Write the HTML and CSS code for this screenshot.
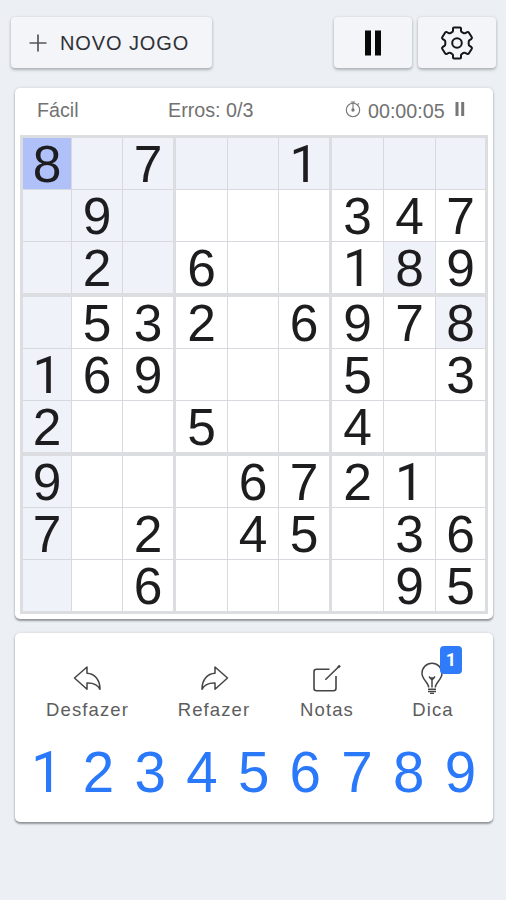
FILE: index.html
```html
<!DOCTYPE html>
<html lang="pt-BR">
<head>
<meta charset="utf-8">
<title>Sudoku</title>
<link rel="stylesheet" href="styles.css">
</head>
<body>
<header class="toolbar">
  <button class="btn btn-new"><svg width="18" height="18" viewBox="0 0 18 18"><path d="M9 .5v17M.5 9h17" stroke="#555" stroke-width="1.7"/></svg><span>NOVO JOGO</span></button>
  <button class="btn btn-icon" aria-label="Pausar"><svg width="18" height="26" viewBox="0 0 18 26"><path d="M1 .5h6v25H1zM11 .5h6v25h-6z" fill="#080808"/></svg></button>
  <button class="btn btn-icon" aria-label="Ajustes"><svg width="34" height="34" viewBox="0 0 34 34" fill="none" stroke="#161616" stroke-width="2" stroke-linejoin="round"><path d="M14 1.500h6q1 0 1 1v2.200q0 1 1 1.500l1.500.9q.9.500 1.800 0l1.900-1q1-.5 1.600.400l3 4.800q.5.900-.3 1.500l-1.900 1.300q-.9.600-.9 1.700v2.400q0 1.100.9 1.700l1.900 1.300q.8.600.3 1.500l-3 4.800q-.6.900-1.600.400l-1.900-1q-.9-.5-1.800 0l-1.500.9q-1 .5-1 1.500v2.200q0 1-1 1h-6q-1 0-1-1v-2.200q0-1-1-1.500l-1.500-.9q-.9-.5-1.800 0l-1.900 1q-1 .5-1.600-.4l-3-4.800q-.5-.9.300-1.500l1.900-1.300q.9-.6.900-1.700v-2.400q0-1.100-.9-1.700l-1.900-1.300q-.8-.6-.3-1.500l3-4.800q.6-.9 1.600-.4l1.900 1q.9.500 1.800 0l1.500-.9q1-.5 1-1.500V2.500q0-1 1-1z"/><circle cx="17" cy="17" r="4.800"/></svg></button>
</header>
<main>
  <section class="card game">
    <div class="status">
      <span class="level">Fácil</span>
      <span class="errors">Erros: 0/3</span>
      <span class="timer"><svg class="clock" width="16" height="17" viewBox="0 0 16 17" fill="none" stroke="#777" stroke-width="1.100"><circle cx="8" cy="9" r="6.700"/><path d="M5.800 1h4.400M8 1v8M12.500 3.500l1.500-1"/><circle cx="8" cy="9" r="1.100" fill="#666"/></svg><span>00:00:05</span><svg class="mini-pause" width="10" height="14" viewBox="0 0 10 14"><path d="M.5 0h3v14h-3zM6.200 0h3v14h-3z" fill="#777"/></svg></span>
    </div>
    <div class="board">
      <div class="block b1"><i class="sel">8</i><i class="hl"></i><i class="hl">7</i><i class="hl"></i><i class="hl">9</i><i class="hl"></i><i class="hl"></i><i class="hl">2</i><i class="hl"></i></div>
      <div class="block b2"><i class="hl"></i><i class="hl"></i><i class="hl one">1</i><i></i><i></i><i></i><i>6</i><i></i><i></i></div>
      <div class="block b3"><i class="hl"></i><i class="hl"></i><i class="hl"></i><i>3</i><i>4</i><i>7</i><i class="one">1</i><i class="hl">8</i><i>9</i></div>
      <div class="block b1"><i class="hl"></i><i>5</i><i>3</i><i class="hl one">1</i><i>6</i><i>9</i><i class="hl">2</i><i></i><i></i></div>
      <div class="block b2"><i>2</i><i></i><i>6</i><i></i><i></i><i></i><i>5</i><i></i><i></i></div>
      <div class="block b3"><i>9</i><i>7</i><i class="hl">8</i><i>5</i><i></i><i>3</i><i>4</i><i></i><i></i></div>
      <div class="block b1"><i class="hl">9</i><i></i><i></i><i class="hl">7</i><i></i><i>2</i><i class="hl"></i><i></i><i>6</i></div>
      <div class="block b2"><i></i><i>6</i><i>7</i><i></i><i>4</i><i>5</i><i></i><i></i><i></i></div>
      <div class="block b3"><i>2</i><i class="one">1</i><i></i><i></i><i>3</i><i>6</i><i></i><i>9</i><i>5</i></div>
    </div>
  </section>
  <section class="card controls">
    <div class="tools">
      <button class="tool"><svg width="30" height="32" viewBox="0 0 30 32" fill="none" stroke="#444" stroke-width="1.500" stroke-linejoin="round"><path d="M1.500 16 14 5v6.300c7.500.3 13 6 13 16-2.500-5-7-6.500-13-6.300v6.300z"/></svg><span>Desfazer</span></button>
      <button class="tool"><svg width="30" height="32" viewBox="0 0 30 32" fill="none" stroke="#444" stroke-width="1.500" stroke-linejoin="round"><path d="M28.500 16 16 5v6.300c-7.500.3-13 6-13 16 2.500-5 7-6.500 13-6.300v6.300z"/></svg><span>Refazer</span></button>
      <button class="tool"><svg width="30" height="32" viewBox="0 0 30 32" fill="none" stroke="#444" stroke-width="1.600"><path d="M17.500 7.300H4.500q-2.500 0-2.500 2.500v16.500q0 2.500 2.500 2.500h17q2.500 0 2.500-2.500V14M13.300 17.800 27 4.500"/><path d="m26 5.500 2-2" stroke-width="2.400"/></svg><span>Notas</span></button>
      <button class="tool"><svg width="30" height="32" viewBox="0 0 30 32" fill="none" stroke="#444" stroke-width="1.500"><path d="M10.700 25.500c0-5.500-6.700-7.500-6.700-14.300a10 10 0 0 1 20 0c0 6.800-6.700 8.800-6.700 14.300M14 25.500V18l-3-3.500M14 18l3-3.500M11.500 16h5M10 27.300h8M10 29.500h8M12 31.400h4"/></svg><span>Dica</span><b class="badge">1</b></button>
    </div>
    <div class="keys"><span class="one">1</span><span>2</span><span>3</span><span>4</span><span>5</span><span>6</span><span>7</span><span>8</span><span>9</span></div>
  </section>
</main>
</body>
</html>
```
FILE: styles.css
```css
* { box-sizing: border-box; }
body {
  margin: 0;
  min-height: 900px;
  background: #ecf0f4;
  font-family: "Liberation Sans", Arial, sans-serif;
}
svg { display: block; flex: none; }
button { border: 0; padding: 0; font: inherit; }
.toolbar { display: flex; gap: 6px; padding: 17px 10px 0 11px; height: 88px; }
.btn {
  display: flex;
  align-items: center;
  justify-content: center;
  height: 51px;
  background: #f3f5f9;
  border-radius: 4px;
  box-shadow: 0 2px 3px rgba(60, 65, 75, .32), 0 0 3px rgba(60, 65, 75, .14);
}
.btn-new {
  width: 201px;
  margin-right: auto;
  justify-content: flex-start;
  gap: 13px;
  padding-left: 18px;
  font-size: 20px;
  letter-spacing: .9px;
  color: #303136;
}
.btn-new span { padding-top: 1px; }
.btn-icon { width: 78px; }
.card {
  width: 478px;
  margin-left: 15px;
  background: #fff;
  border-radius: 5px;
  box-shadow: 0 2px 2px rgba(50, 55, 60, .45), 0 0 3px rgba(50, 55, 60, .18);
}
.game { height: 531px; padding: 0 5px; }
.status {
  display: grid;
  grid-template-columns: 131px 177px 1fr;
  height: 47px;
  padding: 11px 0 0 17px;
  font-size: 19.700px;
  line-height: 23px;
  color: #727272;
  white-space: nowrap;
}
.timer { display: flex; }
.clock { margin: 2px 7px 0 0; }
.timer span { padding-top: 1px; }
.mini-pause { margin: 3px 0 0 10px; }
.board {
  display: grid;
  grid-template-columns: 150px 153px 153px;
  grid-template-rows: repeat(3, 155px);
  gap: 4px 3px;
  width: 468px;
  padding: 3px;
  background: #dcdde1;
}
.block { display: grid; gap: 1px; background: #d8d9de; grid-template-rows: repeat(3, 51px); }
.b1 { grid-template-columns: 48px 50px 50px; }
.b2 { grid-template-columns: 51px 50px 50px; }
.b3 { grid-template-columns: 51px 51px 49px; }
.block i {
  padding-top: 1px;
  background: #fff;
  color: #1d1d1f;
  font-size: 51.500px;
  font-style: normal;
  line-height: 50px;
  text-align: center;
}
.block .hl { background: #f0f2f9; }
.block .sel { background: #b0c1f9; }
.block .one, .keys .one { font-family: Roboto, sans-serif; }
.block .one { line-height: 52px; height: 51px; }
.controls { height: 189px; margin-top: 14px; padding: 29px 6px 0; }
.tools { display: grid; grid-template-columns: 133px 120px 106px 106px; height: 79px; }
.tool {
  position: relative;
  display: flex;
  flex-direction: column;
  align-items: center;
  background: none;
  color: #5d5d5d;
  font-size: 18.500px;
  line-height: 22px;
  letter-spacing: 1.100px;
}
.tool span { margin-top: 5px; }
.badge {
  position: absolute;
  left: 60px;
  top: -16px;
  width: 22px;
  height: 28px;
  border-radius: 4px;
  background: #2f7bfa;
  color: #fff;
  font: bold 18px/27px Roboto, sans-serif;
  letter-spacing: 0;
}
.keys {
  display: grid;
  grid-template-columns: repeat(9, 51.700px);
  color: #2b79fb;
  font-size: 56.500px;
  line-height: 64px;
  text-align: center;
}
```
